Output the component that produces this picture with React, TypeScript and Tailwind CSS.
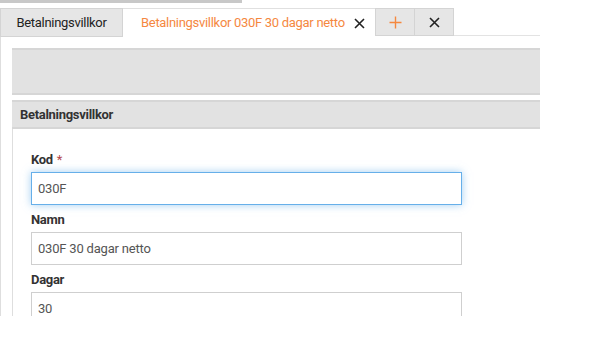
import React from 'react';

const font = { fontFamily: 'Roboto, "Liberation Sans", sans-serif' };

const Field = ({ label, value, required, focused }: { label: string; value: string; required?: boolean; focused?: boolean }) => (
  <div className="flex flex-col">
    <div className="h-[18px] leading-[18px] text-[13px] font-bold text-[#333] tracking-[-0.3px]">
      {label}
      {required && <span className="ml-[4px] font-normal text-[#b5484c]">*</span>}
    </div>
    <div
      className={
        'mt-[3px] w-[431px] h-[33px] flex items-center px-[6px] text-[13px] text-[#555] tracking-[-0.2px] bg-white border ' +
        (focused
          ? 'border-[#66afe9] shadow-[0_0_8px_rgba(102,175,233,0.6)]'
          : 'border-[#cfcfcf]')
      }
    >
      {value}
    </div>
  </div>
);

const CloseIcon = ({ className }: { className?: string }) => (
  <svg width="11" height="11" viewBox="0 0 11 11" className={className}>
    <path d="M1 1L10 10M10 1L1 10" stroke="currentColor" strokeWidth="1.6" />
  </svg>
);

export default function App() {
  return (
    <div className="w-[596px] h-[340px] bg-white overflow-hidden" style={font}>
      <div className="w-[242px] h-[3px] bg-[#c8c8c8]" />

      <div className="mt-[5px] flex h-[29px] w-[540px]">
        <div className="w-[123px] flex items-center justify-center bg-[#e6e6e6] border border-[#d4d4d4] text-[13px] text-[#222] tracking-[-0.3px]">
          Betalningsvillkor
        </div>
        <div className="w-[252px] flex items-center pl-[18px] gap-[9px] bg-white border-t border-[#e0e0e0] text-[13px] text-[#f5883f] tracking-[-0.3px]">
          <span>Betalningsvillkor 030F 30 dagar netto</span>
          <CloseIcon className="text-[#222]" />
        </div>
        <div className="w-[40px] h-[28px] flex items-center justify-center bg-[#e6e6e6] border border-[#d4d4d4]">
          <svg width="13" height="13" viewBox="0 0 13 13">
            <path d="M6.5 0.5V12.5M0.5 6.5H12.5" stroke="#f5883f" strokeWidth="1.4" />
          </svg>
        </div>
        <div className="w-[39px] h-[28px] flex items-center justify-center bg-[#e6e6e6] border border-l-0 border-[#d4d4d4]">
          <CloseIcon className="text-[#222]" />
        </div>
        <div className="flex-1 h-[28px] border-b border-[#e3e3e3]" />
      </div>

      <div className="w-[540px] h-[279px] border-l border-[#dedede] pl-[11px] pt-[11px] overflow-hidden">
        <div className="h-[47px] bg-[#e2e2e2] border-y-2 border-[#d6d6d6]" />

        <div className="mt-[5px] h-[29px] flex items-center px-[8px] bg-[#e2e2e2] border-y-2 border-[#d6d6d6] text-[13px] font-bold text-[#333] tracking-[-0.3px]">
          Betalningsvillkor
        </div>

        <div className="border-l border-[#dedede] h-[200px] pl-[18px] pt-[22px] flex flex-col gap-[6px]">
          <Field label="Kod" value="030F" required focused />
          <Field label="Namn" value="030F 30 dagar netto" />
          <Field label="Dagar" value="30" />
        </div>
      </div>
    </div>
  );
}
